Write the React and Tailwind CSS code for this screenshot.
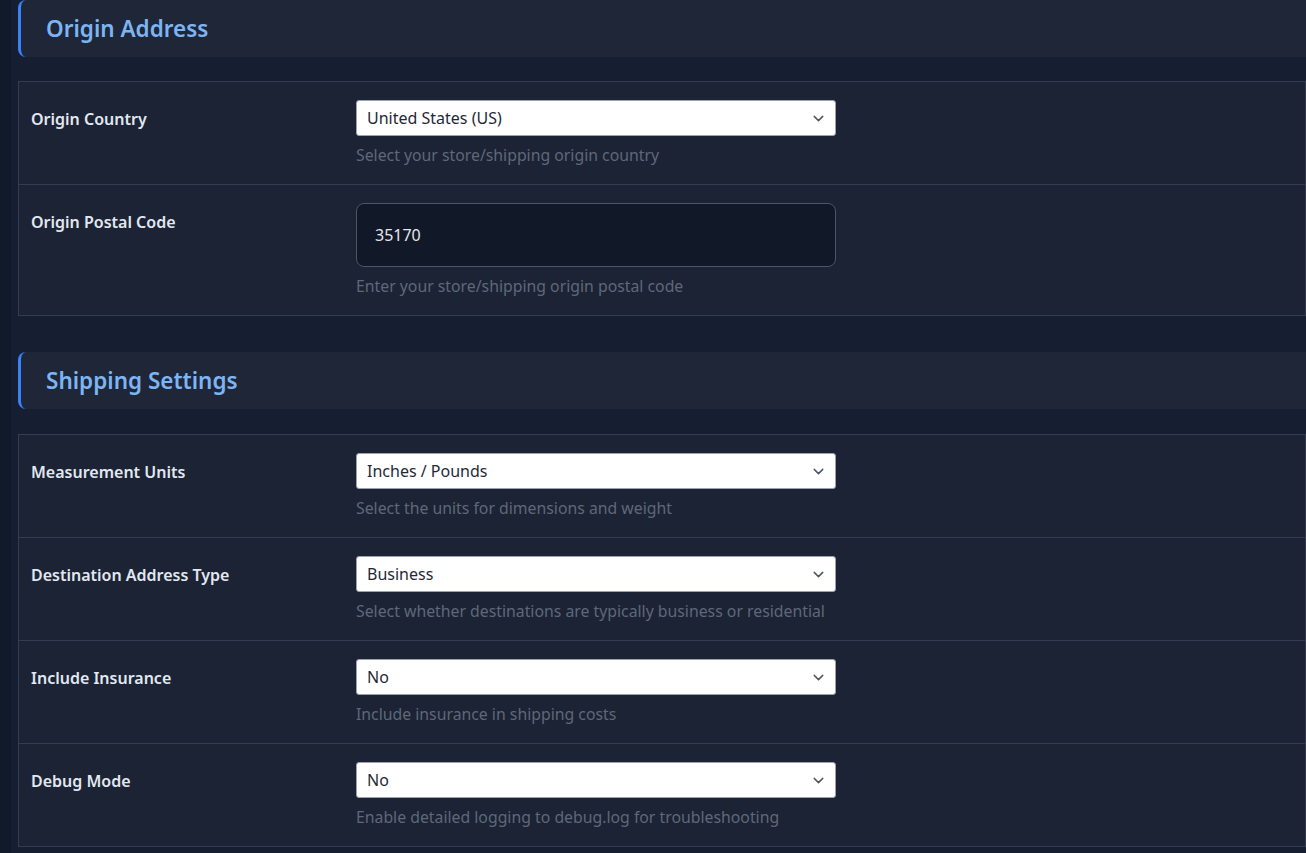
import { ChevronDown } from 'lucide-react';

const SECTIONS = [
  {
    title: 'Origin Address',
    rows: [
      { label: 'Origin Country', type: 'select', value: 'United States (US)', help: 'Select your store/shipping origin country' },
      { label: 'Origin Postal Code', type: 'input', value: '35170', help: 'Enter your store/shipping origin postal code' },
    ],
  },
  {
    title: 'Shipping Settings',
    rows: [
      { label: 'Measurement Units', type: 'select', value: 'Inches / Pounds', help: 'Select the units for dimensions and weight' },
      { label: 'Destination Address Type', type: 'select', value: 'Business', help: 'Select whether destinations are typically business or residential' },
      { label: 'Include Insurance', type: 'select', value: 'No', help: 'Include insurance in shipping costs' },
      { label: 'Debug Mode', type: 'select', value: 'No', help: 'Enable detailed logging to debug.log for troubleshooting' },
    ],
  },
];

function Field({ row }) {
  if (row.type === 'input') {
    return (
      <div className="flex items-center h-[64px] w-[480px] rounded-lg border border-[#4b5563] bg-[#111827] px-[18px] text-[16px] text-[#e5e7eb]">
        {row.value}
      </div>
    );
  }
  return (
    <div className="flex items-center justify-between h-[36px] w-[480px] rounded-[3px] border border-[#9ca3af] bg-white pl-[10px] pr-[8px] text-[16px] text-[#1f2937]">
      <span>{row.value}</span>
      <ChevronDown size={17} strokeWidth={2} className="text-[#4b5563]" />
    </div>
  );
}

function Section({ section, first }) {
  return (
    <div className={first ? '' : 'mt-[36px]'}>
      <div className="flex items-center h-[57px] rounded-l-lg border-l-[3px] border-[#3b82f6] bg-[#1e2638] pl-[25px] pt-[1px]">
        <h2 className="text-[22.5px] font-semibold text-[#7db5f2]">{section.title}</h2>
      </div>
      <div className={`${first ? 'mt-[24px]' : 'mt-[25px]'} border border-[#333d4f] bg-[#1b2335]`}>
        {section.rows.map((row, i) => (
          <div key={row.label} className={`flex pt-[18px] pb-[17px] ${i > 0 ? 'border-t border-[#333d4f]' : ''}`}>
            <div className="w-[337px] shrink-0 pl-[12px] pt-[7px] text-[16px] leading-6 font-semibold text-[#e2e8f0]">
              {row.label}
            </div>
            <div>
              <Field row={row} />
              <p className="mt-[7px] text-[15.8px] leading-6 text-[#5f6878]">{row.help}</p>
            </div>
          </div>
        ))}
      </div>
    </div>
  );
}

export default function App() {
  return (
    <div className="min-h-screen bg-[#111a2a] font-['Noto_Sans',sans-serif]">
      <div className="ml-[11px] min-h-screen bg-[#161f31] pl-[7px]">
        {SECTIONS.map((s, i) => (
          <Section key={s.title} section={s} first={i === 0} />
        ))}
      </div>
    </div>
  );
}
